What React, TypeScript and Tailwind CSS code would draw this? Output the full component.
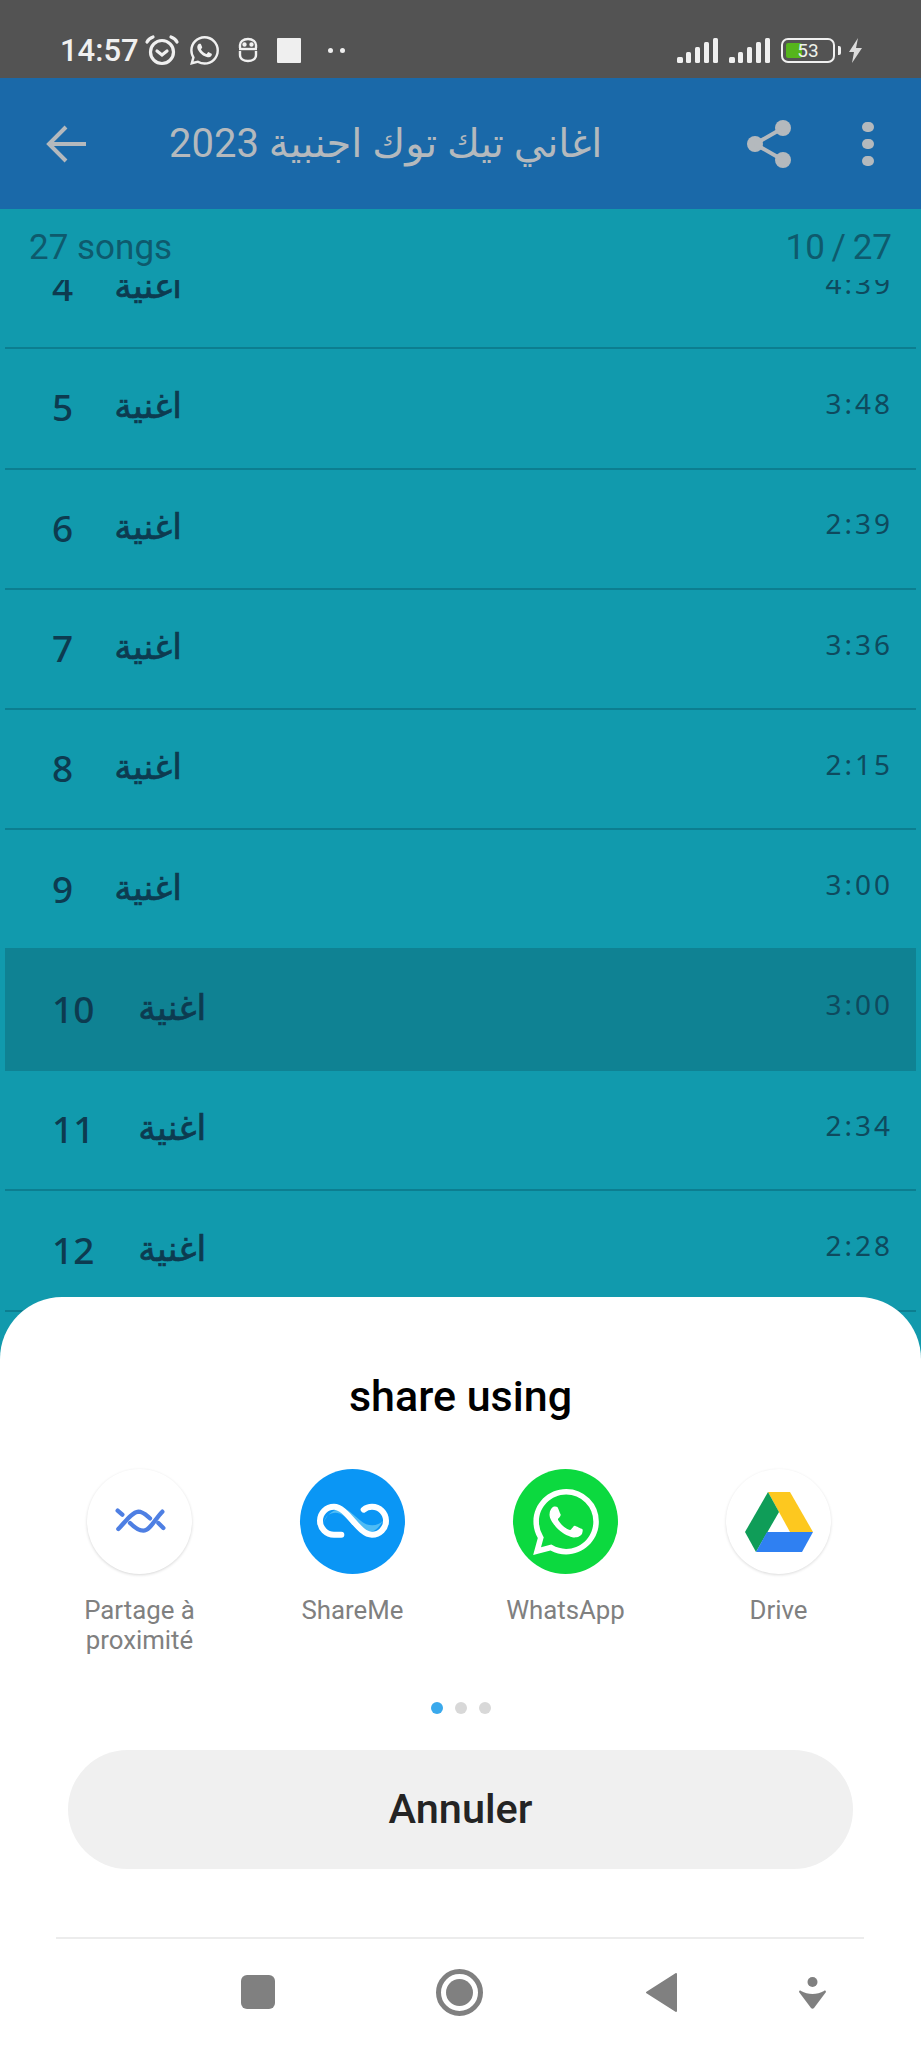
import React from 'react'
import { SiWhatsapp } from 'react-icons/si'

const songs = [
    { n: 4, time: '4:39' },
    { n: 5, time: '3:48' },
    { n: 6, time: '2:39' },
    { n: 7, time: '3:36' },
    { n: 8, time: '2:15' },
    { n: 9, time: '3:00' },
    { n: 10, time: '3:00' },
    { n: 11, time: '2:34' },
    { n: 12, time: '2:28' },
    { n: 13, time: '3:12' },
]

const SignalIcon: React.FC = () => (
    <svg width="41" height="25" viewBox="0 0 41 25" fill="#f0f0f0">
        <rect x="0" y="19" width="6" height="6" rx="1.5" />
        <rect x="9" y="14" width="5" height="11" rx="1.5" />
        <rect x="18" y="9" width="5" height="16" rx="1.5" />
        <rect x="27" y="4" width="5" height="21" rx="1.5" />
        <rect x="36" y="0" width="5" height="25" rx="1.5" />
    </svg>
)

const StatusBar: React.FC = () => (
    <div className="h-[78px] shrink-0 bg-[#535353] flex items-center justify-between pl-[60px] pr-[58px] pt-[22px] text-[#f0f0f0]">
        <div className="flex items-center">
            <span className="text-[31px] font-medium leading-none w-[84px]">14:57</span>
            <svg width="36" height="32" viewBox="0 0 36 32" fill="none" stroke="#f0f0f0" strokeWidth="3.2" strokeLinecap="round">
                <circle cx="18" cy="18" r="11.5" />
                <path d="M13 17l5 4 5-4" />
                <path d="M3 8c1-2 3-4 6-5M33 8c-1-2-3-4-6-5" />
            </svg>
            <SiWhatsapp className="ml-[10px]" size={29} color="#f0f0f0" />
            <svg className="ml-[17px]" width="24" height="26" viewBox="0 0 24 26" fill="none" stroke="#f0f0f0" strokeWidth="2.4">
                <path d="M4 11V8c0-3 3-6 8-6s8 3 8 6v3" />
                <path d="M3 12h18" />
                <path d="M4 14v4c0 4 4 6 8 6s8-2 8-6v-4" />
                <circle cx="8.5" cy="7.5" r="1" fill="#f0f0f0" />
                <circle cx="15.5" cy="7.5" r="1" fill="#f0f0f0" />
            </svg>
            <div className="ml-[17px] w-[24px] h-[25px] bg-[#efefef] rounded-[1px]" />
            <div className="ml-[27px] flex gap-[7px]">
                <div className="w-[5px] h-[5px] rounded-full bg-[#efefef]" />
                <div className="w-[5px] h-[5px] rounded-full bg-[#efefef]" />
            </div>
        </div>
        <div className="flex items-center">
            <SignalIcon />
            <div className="ml-[11px]">
                <SignalIcon />
            </div>
            <div className="ml-[11px] relative w-[54px] h-[25px] rounded-[7px] border-[2.5px] border-[#f0f0f0] p-[3px]">
                <div className="h-full w-[16px] rounded-[2px] bg-[#55b51c]" />
                <span className="absolute inset-0 flex items-center justify-center text-[19px] leading-none text-[#eef2ea]">53</span>
            </div>
            <div className="ml-[3px] w-[3px] h-[9px] bg-[#f0f0f0] rounded-r-[2px]" />
            <svg className="ml-[7px]" width="15" height="25" viewBox="0 0 15 25" fill="#dcdcdc">
                <path d="M10 0L1 14h5l-2 11 10-15H8z" />
            </svg>
        </div>
    </div>
)

const AppBar: React.FC = () => (
    <div className="h-[131px] shrink-0 bg-[#1a69a9] flex items-center text-[#b4b9bd]">
        <svg className="ml-[46px]" width="40" height="38" viewBox="0 0 40 38" fill="none" stroke="#b4b9bd" strokeWidth="4">
            <path d="M40 19H3" />
            <path d="M20 2L3 19l17 17" />
        </svg>
        <div className="ml-[83px] text-[40px] leading-none font-['Roboto','DejaVu_Sans',sans-serif]">اغاني تيك توك اجنبية 2023</div>
        <div className="ml-auto flex items-center">
            <svg width="44" height="48" viewBox="0 0 44 48" fill="#b4b9bd">
                <circle cx="36" cy="8" r="8" />
                <circle cx="8" cy="24" r="8" />
                <circle cx="36" cy="40" r="8" />
                <path d="M8 24L36 8M8 24l28 16" stroke="#b4b9bd" strokeWidth="4" />
            </svg>
            <div className="ml-[71px] mr-[47px] flex flex-col gap-[7px]">
                <div className="w-[12px] h-[10px] rounded-full bg-[#b4b9bd]" />
                <div className="w-[12px] h-[10px] rounded-full bg-[#b4b9bd]" />
                <div className="w-[12px] h-[10px] rounded-full bg-[#b4b9bd]" />
            </div>
        </div>
    </div>
)

const SongRow: React.FC<{ n: number; time: string }> = ({ n, time }) => (
    <div className={`shrink-0 flex items-center pl-[47px] pr-[23px] pb-[3px] border-b-2 ${n === 10 ? 'relative h-[123.3px] -mt-[3px] pt-[3px] bg-[#0f8293] border-transparent' : 'h-[120.3px] border-[#0c7e90]'}`}>
        <span className="text-[37px] leading-none font-medium text-[#0d3b50] font-['Noto_Sans',sans-serif]">{n}</span>
        <span className={`${n < 10 ? 'ml-[41px]' : 'ml-[44px]'} text-[35px] leading-none text-[#0d3b50] [-webkit-text-stroke:0.7px_#0d3b50] font-['DejaVu_Sans',sans-serif]`}>اغنية</span>
        <span className="ml-auto text-[28px] leading-none tracking-[3px] text-[#0e4a5e] font-['Noto_Sans',sans-serif] -translate-y-[4px]">{time}</span>
    </div>
)

const NearbyIcon: React.FC = () => (
    <svg width="70" height="45" viewBox="0 0 210 135" fill="none" stroke="#4e7fe3" strokeWidth="13" strokeLinecap="round">
        <path d="M40 90C60 70 80 40 100 38 115 38 125 50 135 58" />
        <path d="M75 72C85 82 100 95 115 95 135 95 150 60 172 38" />
        <path d="M38 35L52 47M160 72L175 87" />
    </svg>
)

const ShareMeIcon: React.FC = () => (
    <svg width="90" height="55" viewBox="0 0 270 165">
        <path d="M48 84C52 56 88 46 110 68L150 108C168 124 208 118 224 80 212 96 180 100 158 80L122 50C96 36 62 50 48 84Z" fill="#4fbcf5" />
        <path d="M100 122H78A42 42 0 0 1 78 38C118 38 150 122 192 122A42 42 0 0 0 192 38C182 38 174 41 167 47" fill="none" stroke="#fff" strokeWidth="18" strokeLinecap="round" />
    </svg>
)

const DriveIcon: React.FC = () => (
    <svg width="68" height="60" viewBox="0 0 68 60">
        <path d="M23 0H45L68 40H45z" fill="#fdc81f" />
        <path d="M23 0L34 20 11 60 0 40z" fill="#0f9d58" />
        <path d="M22 40H68L57 60H11z" fill="#2f80f2" />
    </svg>
)

const ShareTarget: React.FC<{ label: string; circle: string; children: React.ReactNode }> = ({ label, circle, children }) => (
    <div className="w-[213px] flex flex-col items-center">
        <div className={`w-[105px] h-[105px] rounded-full flex items-center justify-center ${circle}`}>{children}</div>
        <div className="mt-[21px] w-[160px] text-center text-[25.8px] leading-[30px] text-[#808080] font-['Roboto',sans-serif]">{label}</div>
    </div>
)

const ShareSheet: React.FC = () => (
    <div className="absolute bottom-0 inset-x-0 h-[751px] bg-white rounded-t-[62px] flex flex-col font-['Roboto',sans-serif]">
        <div className="mt-[75px] text-center text-[43px] leading-[48px] font-medium text-black">share using</div>
        <div className="mt-[49px] pl-[33px] h-[201px] flex">
            <ShareTarget label="Partage à proximité" circle="bg-white shadow-[0_1px_3px_rgba(0,0,0,0.16)]">
                <NearbyIcon />
            </ShareTarget>
            <ShareTarget label="ShareMe" circle="bg-[#0a96f5]">
                <ShareMeIcon />
            </ShareTarget>
            <ShareTarget label="WhatsApp" circle="bg-[#0cd93f]">
                <SiWhatsapp size={66} color="#ffffff" />
            </ShareTarget>
            <ShareTarget label="Drive" circle="bg-white shadow-[0_1px_3px_rgba(0,0,0,0.14)]">
                <DriveIcon />
            </ShareTarget>
        </div>
        <div className="mt-[32px] flex justify-center gap-[12px]">
            <div className="w-[12px] h-[12px] rounded-full bg-[#3aa9ec]" />
            <div className="w-[12px] h-[12px] rounded-full bg-[#d8d8d8]" />
            <div className="w-[12px] h-[12px] rounded-full bg-[#d8d8d8]" />
        </div>
        <div className="mt-[36px] mx-[68px] h-[119px] rounded-full bg-[#f0f0f0] flex items-center justify-center text-[41.5px] font-medium text-[#242424]">Annuler</div>
        <div className="mt-[68px] ml-[56px] w-[808px] h-[2px] bg-[#ececec]" />
        <div className="relative flex-1">
            <div className="absolute left-[241px] top-[36px] w-[34px] h-[34px] rounded-[6px] bg-[#808080]" />
            <div className="absolute left-[436px] top-[30px] w-[47px] h-[47px] rounded-full border-[5px] border-[#808080] flex items-center justify-center">
                <div className="w-[27px] h-[27px] rounded-full bg-[#808080]" />
            </div>
            <svg className="absolute left-[646px] top-[34px]" width="31" height="39" viewBox="0 0 31 39" fill="#808080" stroke="#808080" strokeWidth="2" strokeLinejoin="round">
                <path d="M30 1v37L1 19.5z" />
            </svg>
            <svg className="absolute left-[799px] top-[38px]" width="27" height="32" viewBox="0 0 27 32" fill="#808080">
                <ellipse cx="13.5" cy="5" rx="5" ry="5" />
                <path d="M0 15c0-1 1-2 2-1 7 4 16 4 23 0 1-1 2 0 2 1L15 31c-1 1-2 1-3 0z" />
            </svg>
        </div>
    </div>
)

const App: React.FC = () => {
    return (
        <div className="relative w-[921px] h-[2048px] overflow-hidden bg-[#119aad] flex flex-col font-['Roboto',sans-serif]">
            <StatusBar />
            <AppBar />
            <div className="h-[71px] shrink-0 relative z-10 bg-[#119aad] flex items-start justify-between px-[29px] pt-[21px] leading-[36px] text-[#0e5a6d]">
                <span className="text-[35px]">27 songs</span>
                <span className="text-[35px] [word-spacing:-2px]">10 / 27</span>
            </div>
            <div className="flex-1 mx-[5px] -mt-[51px] flex flex-col">
                {songs.map((song) => (
                    <SongRow key={song.n} n={song.n} time={song.time} />
                ))}
            </div>
            <ShareSheet />
        </div>
    )
}

export default App
